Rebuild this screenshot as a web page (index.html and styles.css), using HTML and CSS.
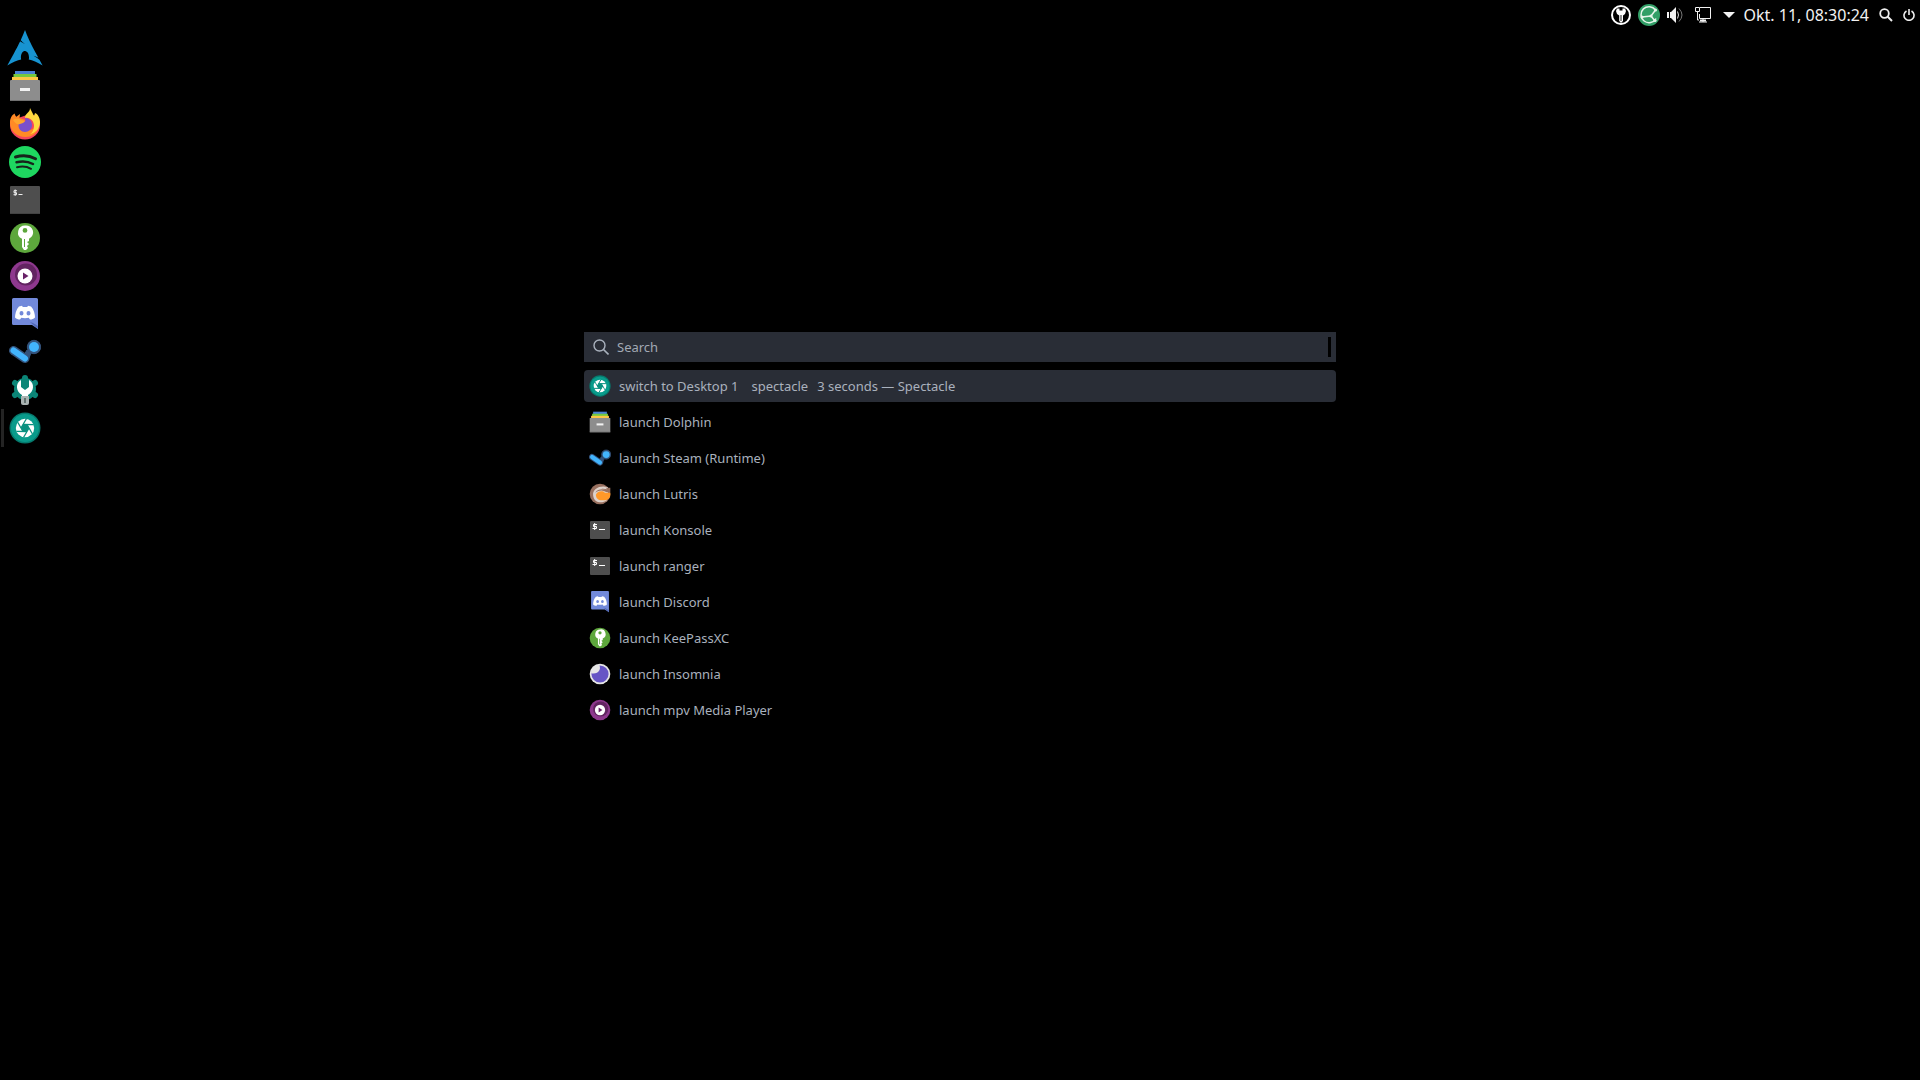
FILE: index.html
```html
<!DOCTYPE html>
<html lang="en">
<head>
<meta charset="utf-8">
<title>Desktop</title>
<link rel="stylesheet" href="styles.css">
</head>
<body>
<svg class="defs" aria-hidden="true">
  <symbol id="arch" viewBox="0 0 36 36"><path fill="#1793d1" d="M18 0c-1.600 4-2.600 6.500-4.300 10.200 1 1.100 2.300 2.400 4.300 3.800-2.200-.9-3.700-1.800-4.800-2.700C10.900 16 7.400 22.800.3 35.600c5.600-3.200 9.900-5.200 13.900-6-.2-.7-.3-1.500-.3-2.400.1-3.500 1.900-6.300 4.200-6.100s4 3.200 3.900 6.700c0 .6-.1 1.300-.3 1.800 4 .8 8.300 2.700 13.900 6l-3-5.600c-1.500-1.100-3-2.600-6.100-4.200 2.200.6 3.700 1.200 4.900 1.900C21.700 10 20.900 7.200 18 0z"/></symbol>
  <symbol id="files" viewBox="0 0 32 32"><path fill="#4a80d4" d="M6 1h20v5H6z"/><path fill="#75c93e" d="M4.500 4h23v5h-23z"/><path fill="#fcc644" d="M3 7h26v5H3z"/><rect x="1" y="10" width="30" height="21" rx="1" fill="#8d8d8d"/><path fill="#707070" d="M1 30h30v1H1z"/><path fill="#f2f2f2" d="M11 18h10v3H11z"/></symbol>
  <symbol id="firefox" viewBox="0 0 32 32"><path fill="#f5455d" d="M31 17a15 14.500 0 1 1-30 0C1 12 3 8 5 7l4 3 12-4 6 2c3 3 4 6 4 9z"/><path fill="#ff8a26" d="M1 15C1 10 3 7 5.500 5.500L7 9l4-3-.5 4 6 2-4 4c0 7 10 8 14 3l3 1c-2 6-7 9-13 9C8 29 1 23 1 15z"/><path fill="#ffd93f" d="M21 0c0 5-5 5-5 10 5-1 9 3 9 8 0 4-2 7-4 8 6-1 10-6 10-12 0-4-2-8-5-9l-1 3c-1-2-2-4-4-8z"/><path fill="#7a50cc" d="M16 10c4 0 7 3 7 7s-3 7-7 7-6.500-3-6.500-6.500c0-2 1-3 2-3.500 3 1 5-.5 5-2z"/><path fill="#ffa52e" d="M4 12c3-2 6-1 8 0l4 1c-1 2-3 2-5 3-3 1-5-1-7-4z"/></symbol>
  <symbol id="spotify" viewBox="0 0 32 32"><circle cx="16" cy="16" r="16" fill="#1ed760"/><g fill="none" stroke="#17231b" stroke-linecap="round"><path stroke-width="3" d="M6.500 11c7-2 14-1.500 20 1.700"/><path stroke-width="2.500" d="M7.500 16.300c6-1.600 11.500-1 16.500 1.700"/><path stroke-width="2" d="M8 21.300c5-1.200 10-.8 14 1.500"/></g></symbol>
  <symbol id="terminal" viewBox="0 0 32 32"><rect x="1" y="2" width="30" height="28" rx="1" fill="#4e4e4e"/><path d="M1 29h30v1H1z" fill="#424242"/><path d="M8 6.700H5v2h2.500v2H4.500M6.200 5.500v6.300M9.500 10.500h4" fill="none" stroke="#eee"/></symbol>
  <symbol id="terminal-small" viewBox="0 0 22 22"><rect x="1" y="2" width="20" height="18" rx="1" fill="#4e4e4e"/><path d="M8 5.500H4.500v2h3v2H3.500M5.700 4v7M10 10.500h6" fill="none" stroke="#fff"/></symbol>
  <symbol id="key" viewBox="0 0 32 32"><circle cx="16" cy="16" r="15" fill="#5da73c"/><path fill="#fff" fill-rule="evenodd" d="M16 3.500a7 7 0 0 0-3 13.300V25l2 3h2l2-2-1-2 2-2-2-2 2-1v-2.200A7 7 0 0 0 16 3.500zm0 2.500a2.400 2.400 0 1 1 0 4.800A2.400 2.400 0 0 1 16 6zM15 17h1v8h-1z"/></symbol>
  <symbol id="mpv" viewBox="0 0 32 32"><circle cx="16" cy="16" r="15" fill="#8e388e"/><circle cx="17" cy="14.500" r="11" fill="#622461"/><circle cx="16" cy="16" r="7.500" fill="#fff"/><path d="M14 12.500v7l5.500-3.500z" fill="#682167"/></symbol>
  <symbol id="discord" viewBox="0 0 32 32"><path fill="#7289da" d="M4.500 0h23q1.500 0 1.500 1.500V31l-6-4H4.500Q3 27 3 25.500v-24Q3 0 4.500 0z"/><path fill="#5269b4" d="M21 24l8 7v-3l-5-3z"/><path fill="#fff" fill-rule="evenodd" d="M10 8.500l3-.8.8 1.200h4.400l.8-1.200 3 .8c3 3 4 8 4 11-1.500 1.500-3 2-5 2l-1.300-1.800c-2 .6-5.400.6-7.400 0L11 21.500c-2 0-3.500-.5-5-2 0-3 1-8 4-11zM12.500 13a2 2.200 0 1 0 0 4.400 2 2.200 0 0 0 0-4.400zm7 0a2 2.200 0 1 0 0 4.400 2 2.200 0 0 0 0-4.400z"/></symbol>
  <symbol id="steam" viewBox="0 0 32 32"><g fill="#34537c" stroke="#34537c"><circle cx="25" cy="11" r="6.700"/><path d="M4.500 14.500L16 22.500" fill="none" stroke-width="9" stroke-linecap="round"/><path d="M18 14l4 3-2 5-5-3z"/></g><circle cx="25" cy="11" r="5" fill="#42b4fd"/><path d="M4.500 14.500L16 22.500" fill="none" stroke="#42b4fd" stroke-width="6" stroke-linecap="round"/></symbol>
  <symbol id="settings" viewBox="0 0 32 32"><g fill="#0b8577"><circle cx="16" cy="15" r="11"/><g stroke="#0b8577" stroke-width="6" stroke-linecap="round"><path d="M16 4v22M6 9l20 12M26 9L6 21"/></g></g><path fill="#fff" d="M12 6v7l4 3 4-3V6c6 3 5 12-1 15v2h-6v-2C7 18 6 9 12 6z"/><path fill="#a9b2b1" d="M12 22h8v7q0 2-2 2h-4q-2 0-2-2z"/><path fill="#62706e" d="M15 24h2v5h-2z"/></symbol>
  <symbol id="shutter" viewBox="0 0 32 32"><circle cx="16" cy="16" r="15.500" fill="#06796d"/><circle cx="16" cy="16" r="14" fill="#099b8b"/><circle cx="16" cy="16" r="9.200" fill="#fff"/><g stroke="#099080" stroke-width="1.300"><path id="blade" d="M18 12.500L23.300 21.800"/><use href="#blade" transform="rotate(60 16 16)"/><use href="#blade" transform="rotate(120 16 16)"/><use href="#blade" transform="rotate(180 16 16)"/><use href="#blade" transform="rotate(240 16 16)"/><use href="#blade" transform="rotate(300 16 16)"/></g><path fill="#099080" d="M20 16l-2 3.500h-4L12 16l2-3.500h4z"/></symbol>
  <symbol id="lutris" viewBox="0 0 32 32"><circle cx="16" cy="16" r="15" fill="#98705f"/><path fill="#ddd2cc" d="M6 18C5 10 12 5 21 5l7 1-2 3-8-1 10 4-2 13c-8 6-19 3-20-7z"/><path fill="#98705f" d="M9 14c4-6 10-5 19-4l-4-3h7v7l-6-1c-5-3-10-3-16 1z"/><path fill="#ff9829" d="M10 17c3-6 10-6 13-3h8c1 8-3 11-10 11-7 1-11-3-11-8z"/></symbol>
  <symbol id="insomnia" viewBox="0 0 32 32"><circle cx="16" cy="16" r="15" fill="#e6e6e6"/><circle cx="16" cy="16" r="12.500" fill="#6655c5"/><path fill="#e6e6e6" d="M3 15C3 8 8 3 15 3c3 6-1 14-12 12z"/></symbol>
</svg>

<header class="topbar">
  <button class="tray" aria-label="Password manager"><svg width="20" height="20" viewBox="0 0 20 20"><circle cx="10" cy="10" r="9" fill="none" stroke="#fff" stroke-width="2"/><path fill="#fff" d="M6 3.500h2.500v2h3v-2H14l1 2.500-1 3-2 1.500V16l-2 2-1.800-2v-5.500L6 9 5 6z"/><path d="M10 10v6" stroke="#222"/></svg></button>
  <button class="tray" aria-label="Sync status"><svg width="22" height="22" viewBox="0 0 22 22"><circle cx="11" cy="11" r="11" fill="#329f67"/><g fill="none" stroke="#e5f5ea" stroke-width="1.500"><path d="M17.500 6A8 8 0 1 0 18 14.500M4 13l9-1 4.500-6M13 12l4 5"/></g><g fill="#e5f5ea"><circle cx="17.500" cy="6" r="1.600"/><circle cx="4" cy="13" r="1.600"/><circle cx="13" cy="12" r="1.600"/><circle cx="17" cy="16.500" r="1.600"/></g></svg></button>
  <button class="tray" aria-label="Volume"><svg width="16" height="16" viewBox="0 0 16 16"><path fill="#f2f2f2" d="M0 5h2v6H0zM3 5h1l5-5v16l-5-5H3z"/><path d="M10.500 4.500q2 3.500 0 7" fill="none" stroke="#ddd"/><path d="M12 1.500q6 6.500 0 13" fill="none" stroke="#777"/></svg></button>
  <button class="tray" aria-label="Network"><svg width="16" height="16" viewBox="0 0 16 16"><path d="M5 .5h10.500v11H4.500V7M.5.500h4v4h-4zM2.500 5v8H4M8 12v3M4 15h8" fill="none" stroke="#f2f2f2"/><path d="M5 13.500h6" stroke="#f2f2f2" stroke-width="2"/></svg></button>
  <button class="tray" aria-label="Show hidden icons"><svg width="12" height="6" viewBox="0 0 12 6"><path fill="#f2f2f2" d="M0 0h12L6 6z"/></svg></button>
  <time class="clock">Okt. 11, 08:30:24</time>
  <button class="tray" aria-label="Search"><svg width="14" height="14" viewBox="0 0 14 14"><circle cx="5.500" cy="5.500" r="4.300" fill="none" stroke="#eee" stroke-width="1.800"/><path d="M8.500 8.500l4.500 4.500" stroke="#eee" stroke-width="2"/></svg></button>
  <button class="tray" aria-label="Power"><svg width="12" height="12" viewBox="0 0 12 12"><path d="M3.500 2a5 5 0 1 0 5 0M6 0v6" fill="none" stroke="#eee" stroke-width="1.600"/></svg></button>
</header>

<div class="workspace">
  <nav class="dock" aria-label="Applications">
    <button class="app" aria-label="Application menu"><svg class="large"><use href="#arch"/></svg></button>
    <button class="app" aria-label="Dolphin"><svg><use href="#files"/></svg></button>
    <button class="app" aria-label="Firefox"><svg><use href="#firefox"/></svg></button>
    <button class="app" aria-label="Spotify"><svg><use href="#spotify"/></svg></button>
    <button class="app" aria-label="Konsole"><svg><use href="#terminal"/></svg></button>
    <button class="app" aria-label="KeePassXC"><svg><use href="#key"/></svg></button>
    <button class="app" aria-label="mpv"><svg><use href="#mpv"/></svg></button>
    <button class="app" aria-label="Discord"><svg><use href="#discord"/></svg></button>
    <button class="app" aria-label="Steam"><svg><use href="#steam"/></svg></button>
    <button class="app" aria-label="System settings"><svg><use href="#settings"/></svg></button>
    <button class="app running" aria-label="Spectacle"><svg><use href="#shutter"/></svg></button>
  </nav>

  <main class="launcher">
    <label class="search">
      <svg width="16" height="16" viewBox="0 0 16 16" aria-hidden="true"><circle cx="6.500" cy="6.500" r="5.500" fill="none" stroke="#a9b1bd" stroke-width="1.400"/><path d="M10.500 10.500l5 5" stroke="#a9b1bd" stroke-width="1.600"/></svg>
      <input type="text" placeholder="Search" aria-label="Search">
      <span class="handle"></span>
    </label>
    <ul class="results">
      <li><button class="result selected"><svg><use href="#shutter"/></svg><span class="parts"><span>switch to Desktop 1</span><span class="command">spectacle</span><span>3 seconds — Spectacle</span></span></button></li>
      <li><button class="result"><svg><use href="#files"/></svg>launch Dolphin</button></li>
      <li><button class="result"><svg><use href="#steam"/></svg>launch Steam (Runtime)</button></li>
      <li><button class="result"><svg><use href="#lutris"/></svg>launch Lutris</button></li>
      <li><button class="result"><svg><use href="#terminal-small"/></svg>launch Konsole</button></li>
      <li><button class="result"><svg><use href="#terminal-small"/></svg>launch ranger</button></li>
      <li><button class="result"><svg><use href="#discord"/></svg>launch Discord</button></li>
      <li><button class="result"><svg><use href="#key"/></svg>launch KeePassXC</button></li>
      <li><button class="result"><svg><use href="#insomnia"/></svg>launch Insomnia</button></li>
      <li><button class="result"><svg><use href="#mpv"/></svg>launch mpv Media Player</button></li>
    </ul>
  </main>
</div>
</body>
</html>
```

FILE: styles.css
```css
* { box-sizing: border-box; }

body {
  margin: 0;
  min-height: 100vh;
  background: #000;
  color: #a9b1bd;
  font-family: "Noto Sans", sans-serif;
  font-size: 13px;
}

button {
  padding: 0;
  border: 0;
  background: none;
  color: inherit;
  font: inherit;
}

svg { display: block; flex: none; }

.defs { position: absolute; width: 0; height: 0; }

.topbar {
  display: flex;
  justify-content: flex-end;
  align-items: center;
  gap: 10px;
  height: 29px;
  padding: 1px 5px 0 0;
}

.tray { display: flex; justify-content: center; }

.topbar .tray:nth-child(-n+2) { margin-right: -3px; }
.topbar .tray:nth-child(n+3):nth-child(-n+4) { margin-right: 2px; }
.topbar .clock { margin-left: -2px; }

.clock {
  color: #f2f2f2;
  font-size: 16px;
  line-height: 22px;
}

.workspace {
  display: grid;
  grid-template-columns: 1fr minmax(320px, 752px) 1fr;
  align-items: start;
}

.dock {
  display: flex;
  flex-direction: column;
  width: 50px;
}

.app {
  display: flex;
  align-items: center;
  justify-content: center;
  height: 38px;
  border: solid transparent;
  border-width: 1px 4px;
}

.app svg { width: 32px; height: 32px; }
.app svg.large { width: 36px; height: 36px; }
.app.running { border-image: linear-gradient(to right, #000 1px, #242424 1px, #242424 4px, transparent 4px) 1 4; }

.launcher { padding-top: 303px; }

.search {
  display: flex;
  align-items: center;
  gap: 8px;
  height: 30px;
  padding: 0 5px 0 9px;
  background: #292d36;
}

.search input {
  flex: 1;
  min-width: 0;
  padding: 0;
  border: 0;
  outline: 0;
  background: none;
  color: inherit;
  font: inherit;
}

.search input::placeholder { color: #a2a9b4; opacity: 1; }

.handle { width: 3px; height: 20px; background: #000; }

.results {
  display: flex;
  flex-direction: column;
  gap: 4px;
  margin: 8px 0 0;
  padding: 0;
  list-style: none;
}

.result {
  display: flex;
  align-items: center;
  gap: 8px;
  width: 100%;
  height: 32px;
  padding: 0 5px;
  border-radius: 4px;
  text-align: left;
}

.result svg { width: 22px; height: 22px; }
.selected { background: #292d36; }
.parts { display: flex; gap: 9px; }
.command { padding-left: 4px; }
```
